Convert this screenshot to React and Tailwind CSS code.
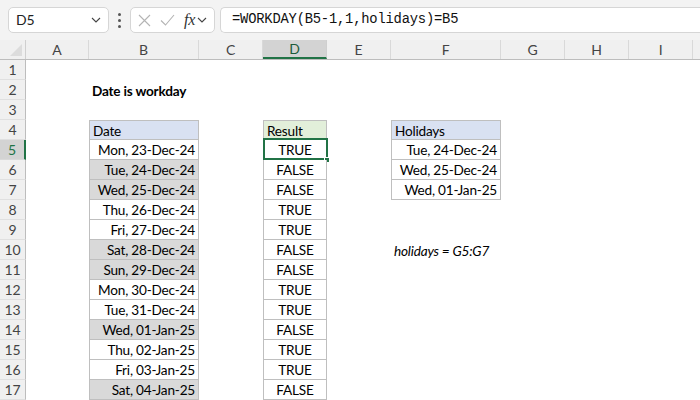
import React from "react";

const COLS = ["A", "B", "C", "D", "E", "F", "G", "H", "I"];
const GRID = "grid grid-cols-[26px_63px_110px_64px_64px_64px_110px_64px_64px_64px_1fr]";

const dates = [
  ["Mon, 23-Dec-24", false, "TRUE"],
  ["Tue, 24-Dec-24", true, "FALSE"],
  ["Wed, 25-Dec-24", true, "FALSE"],
  ["Thu, 26-Dec-24", false, "TRUE"],
  ["Fri, 27-Dec-24", false, "TRUE"],
  ["Sat, 28-Dec-24", true, "FALSE"],
  ["Sun, 29-Dec-24", true, "FALSE"],
  ["Mon, 30-Dec-24", false, "TRUE"],
  ["Tue, 31-Dec-24", false, "TRUE"],
  ["Wed, 01-Jan-25", true, "FALSE"],
  ["Thu, 02-Jan-25", false, "TRUE"],
  ["Fri, 03-Jan-25", false, "TRUE"],
  ["Sat, 04-Jan-25", true, "FALSE"],
];

const holidays = ["Tue, 24-Dec-24", "Wed, 25-Dec-24", "Wed, 01-Jan-25"];

function Chevron({ className }) {
  return (
    <svg width="10" height="6" viewBox="0 0 10 6" className={className}>
      <path d="M1 1l4 4 4-4" fill="none" stroke="#444" strokeWidth="1.1" />
    </svg>
  );
}

function Toolbar() {
  return (
    <div className="flex items-center h-[40px] pt-[7px] pb-[7px] pl-[8px] bg-[#f3f3f3]">
      <div className="flex items-center justify-between w-[101px] h-[26px] bg-white border border-[#d6d6d6] rounded-[5px] pl-[7px] pr-[7px]">
        <span className="text-[14px] text-[#222]">D5</span>
        <Chevron />
      </div>
      <div className="flex flex-col gap-[3px] items-center w-[21px]">
        <span className="w-[3px] h-[3px] bg-[#555] rounded-full" />
        <span className="w-[3px] h-[3px] bg-[#555] rounded-full" />
        <span className="w-[3px] h-[3px] bg-[#555] rounded-full" />
      </div>
      <div className="flex items-center w-[85px] h-[26px] bg-white border border-[#d6d6d6] rounded-[5px] pl-[7px] gap-[9px]">
        <svg width="13" height="13" viewBox="0 0 13 13">
          <path d="M1 1l11 11M12 1L1 12" stroke="#b4b4b4" strokeWidth="1.1" fill="none" />
        </svg>
        <svg width="15" height="12" viewBox="0 0 15 12">
          <path d="M1 6.5l4.5 4.5L14 1" stroke="#b4b4b4" strokeWidth="1.1" fill="none" />
        </svg>
        <div className="flex items-center gap-[2px]">
          <span className="font-['Liberation_Serif',serif] italic text-[16px] text-[#333] leading-none">fx</span>
          <Chevron />
        </div>
      </div>
      <div className="flex items-center flex-1 h-[26px] ml-[5px] bg-white border border-r-0 border-[#d6d6d6] rounded-l-[5px] pl-[11px]">
        <span className="font-['Liberation_Mono',monospace] text-[13.8px] text-[#111]">
          =WORKDAY(B5-1,1,holidays)=B5
        </span>
      </div>
    </div>
  );
}

function ColumnHeaders() {
  return (
    <div className={`${GRID} h-[20px] bg-[#f0f0f0] border-b border-[#bdbdbd]`}>
      <div className="relative border-r border-[#cfcfcf]">
        <svg width="12" height="12" viewBox="0 0 12 12" className="absolute right-[3px] bottom-[3px]">
          <path d="M12 0v12H0z" fill="#dcdcdc" />
        </svg>
      </div>
      {COLS.map((c) => (
        <div
          key={c}
          className={
            c === "D"
              ? "flex items-center justify-center text-[14px] text-[#1d5c3a] bg-[#d3d3d3] border-b-2 border-[#217346] border-r border-r-[#cfcfcf]"
              : "flex items-center justify-center text-[14px] text-[#444] border-r border-[#d9d9d9]"
          }
        >
          {c}
        </div>
      ))}
      <div />
    </div>
  );
}

function RowHead({ n }) {
  const active = n === 5;
  return (
    <div
      className={
        active
          ? "flex items-center justify-center pt-[1px] text-[14px] text-[#217346] bg-[#d3d3d3] border-r-2 border-[#217346] border-b border-b-[#d9d9d9]"
          : "flex items-center justify-center pt-[1px] text-[14px] text-[#444] bg-[#f0f0f0] border-r border-[#bdbdbd] border-b border-b-[#e0e0e0]"
      }
    >
      {n}
    </div>
  );
}

function Empty() {
  return <div />;
}

export default function App() {
  const rows = [];
  for (let n = 1; n <= 17; n++) {
    const cells = [<RowHead key="h" n={n} />];
    // Column A
    cells.push(<Empty key="A" />);
    // Column B
    if (n === 2) {
      cells.push(
        <div key="B" className="flex items-center pt-[3px] pl-[3px] font-bold">
          Date is workday
        </div>
      );
    } else if (n === 4) {
      cells.push(
        <div key="B" className="flex items-center pt-[3px] pl-[3px] bg-[#d9e1f2] border border-[#bfbfbf]">
          Date
        </div>
      );
    } else if (n >= 5) {
      const [d, grey] = dates[n - 5];
      cells.push(
        <div
          key="B"
          className={`flex items-center justify-end pt-[3px] pr-[3px] border-x border-b border-[#bfbfbf] ${grey ? "bg-[#d9d9d9]" : "bg-white"}`}
        >
          {d}
        </div>
      );
    } else cells.push(<Empty key="B" />);
    // Column C
    cells.push(<Empty key="C" />);
    // Column D
    if (n === 4) {
      cells.push(
        <div key="D" className="flex items-center pt-[3px] pl-[3px] bg-[#e2efda] border border-[#bfbfbf]">
          Result
        </div>
      );
    } else if (n >= 5) {
      const v = dates[n - 5][2];
      cells.push(
        <div key="D" className="relative flex items-center justify-center pt-[3px] border-x border-b border-[#bfbfbf] bg-white">
          {v}
          {n === 5 && (
            <>
              <div className="absolute left-[-1px] top-[-2px] right-[-2px] bottom-[-1px] border-2 border-[#217346]" />
              <div className="absolute right-[-4px] bottom-[-4px] w-[6px] h-[6px] bg-[#217346] border border-white" />
            </>
          )}
        </div>
      );
    } else cells.push(<Empty key="D" />);
    // Column E
    cells.push(<Empty key="E" />);
    // Column F
    if (n === 4) {
      cells.push(
        <div key="F" className="flex items-center pt-[3px] pl-[3px] bg-[#d9e1f2] border border-[#bfbfbf]">
          Holidays
        </div>
      );
    } else if (n >= 5 && n <= 7) {
      cells.push(
        <div key="F" className="flex items-center justify-end pt-[3px] pr-[3px] border-x border-b border-[#bfbfbf] bg-white">
          {holidays[n - 5]}
        </div>
      );
    } else if (n === 10) {
      cells.push(
        <div key="F" className="flex items-center pt-[3px] pl-[3px] italic">
          holidays = G5:G7
        </div>
      );
    } else cells.push(<Empty key="F" />);
    cells.push(<Empty key="G" />, <Empty key="H" />, <Empty key="I" />, <Empty key="J" />);
    rows.push(
      <div key={n} className={`${GRID} h-[20px]`}>
        {cells}
      </div>
    );
  }

  return (
    <div className="w-[700px] h-[400px] overflow-hidden bg-white font-['Lato',sans-serif] text-[13.6px] tracking-[-0.2px] text-black leading-none whitespace-nowrap">
      <Toolbar />
      <ColumnHeaders />
      {rows}
    </div>
  );
}
